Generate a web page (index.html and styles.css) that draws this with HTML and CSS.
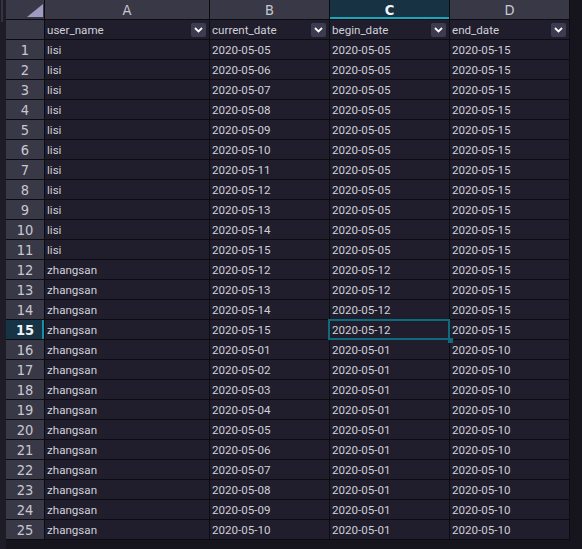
FILE: index.html
```html
<!DOCTYPE html>
<html>
<head>
<meta charset="utf-8">
<link rel="stylesheet" href="styles.css">
</head>
<body>
<div class="app">
  <div class="strip"><div class="thumb"></div></div>
  <div class="sheet">
    <div class="corner"><svg width="16" height="13" viewBox="0 0 16 13"><polygon points="16,0 16,13 0,13" fill="#9e9cc2"/></svg></div>
    <div class="colhead">A</div>
    <div class="colhead">B</div>
    <div class="colhead sel">C</div>
    <div class="colhead">D</div>

    <div class="rownum"></div>
    <div class="cell filt">user_name<span class="dd"><svg width="9" height="6" viewBox="0 0 9 6"><path d="M1 1 L4.5 4.5 L8 1" fill="none" stroke="#fff" stroke-width="1.8"/></svg></span></div>
    <div class="cell filt">current_date<span class="dd"><svg width="9" height="6" viewBox="0 0 9 6"><path d="M1 1 L4.5 4.5 L8 1" fill="none" stroke="#fff" stroke-width="1.8"/></svg></span></div>
    <div class="cell filt">begin_date<span class="dd"><svg width="9" height="6" viewBox="0 0 9 6"><path d="M1 1 L4.5 4.5 L8 1" fill="none" stroke="#fff" stroke-width="1.8"/></svg></span></div>
    <div class="cell filt">end_date<span class="dd"><svg width="9" height="6" viewBox="0 0 9 6"><path d="M1 1 L4.5 4.5 L8 1" fill="none" stroke="#fff" stroke-width="1.8"/></svg></span></div>

    <div class="rownum">1</div><div class="cell">lisi</div><div class="cell">2020-05-05</div><div class="cell">2020-05-05</div><div class="cell">2020-05-15</div>
    <div class="rownum">2</div><div class="cell">lisi</div><div class="cell">2020-05-06</div><div class="cell">2020-05-05</div><div class="cell">2020-05-15</div>
    <div class="rownum">3</div><div class="cell">lisi</div><div class="cell">2020-05-07</div><div class="cell">2020-05-05</div><div class="cell">2020-05-15</div>
    <div class="rownum">4</div><div class="cell">lisi</div><div class="cell">2020-05-08</div><div class="cell">2020-05-05</div><div class="cell">2020-05-15</div>
    <div class="rownum">5</div><div class="cell">lisi</div><div class="cell">2020-05-09</div><div class="cell">2020-05-05</div><div class="cell">2020-05-15</div>
    <div class="rownum">6</div><div class="cell">lisi</div><div class="cell">2020-05-10</div><div class="cell">2020-05-05</div><div class="cell">2020-05-15</div>
    <div class="rownum">7</div><div class="cell">lisi</div><div class="cell">2020-05-11</div><div class="cell">2020-05-05</div><div class="cell">2020-05-15</div>
    <div class="rownum">8</div><div class="cell">lisi</div><div class="cell">2020-05-12</div><div class="cell">2020-05-05</div><div class="cell">2020-05-15</div>
    <div class="rownum">9</div><div class="cell">lisi</div><div class="cell">2020-05-13</div><div class="cell">2020-05-05</div><div class="cell">2020-05-15</div>
    <div class="rownum">10</div><div class="cell">lisi</div><div class="cell">2020-05-14</div><div class="cell">2020-05-05</div><div class="cell">2020-05-15</div>
    <div class="rownum">11</div><div class="cell">lisi</div><div class="cell">2020-05-15</div><div class="cell">2020-05-05</div><div class="cell">2020-05-15</div>
    <div class="rownum">12</div><div class="cell">zhangsan</div><div class="cell">2020-05-12</div><div class="cell">2020-05-12</div><div class="cell">2020-05-15</div>
    <div class="rownum">13</div><div class="cell">zhangsan</div><div class="cell">2020-05-13</div><div class="cell">2020-05-12</div><div class="cell">2020-05-15</div>
    <div class="rownum">14</div><div class="cell">zhangsan</div><div class="cell">2020-05-14</div><div class="cell">2020-05-12</div><div class="cell">2020-05-15</div>
    <div class="rownum sel">15</div><div class="cell">zhangsan</div><div class="cell">2020-05-15</div><div class="cell active">2020-05-12</div><div class="cell">2020-05-15</div>
    <div class="rownum">16</div><div class="cell">zhangsan</div><div class="cell">2020-05-01</div><div class="cell">2020-05-01</div><div class="cell">2020-05-10</div>
    <div class="rownum">17</div><div class="cell">zhangsan</div><div class="cell">2020-05-02</div><div class="cell">2020-05-01</div><div class="cell">2020-05-10</div>
    <div class="rownum">18</div><div class="cell">zhangsan</div><div class="cell">2020-05-03</div><div class="cell">2020-05-01</div><div class="cell">2020-05-10</div>
    <div class="rownum">19</div><div class="cell">zhangsan</div><div class="cell">2020-05-04</div><div class="cell">2020-05-01</div><div class="cell">2020-05-10</div>
    <div class="rownum">20</div><div class="cell">zhangsan</div><div class="cell">2020-05-05</div><div class="cell">2020-05-01</div><div class="cell">2020-05-10</div>
    <div class="rownum">21</div><div class="cell">zhangsan</div><div class="cell">2020-05-06</div><div class="cell">2020-05-01</div><div class="cell">2020-05-10</div>
    <div class="rownum">22</div><div class="cell">zhangsan</div><div class="cell">2020-05-07</div><div class="cell">2020-05-01</div><div class="cell">2020-05-10</div>
    <div class="rownum">23</div><div class="cell">zhangsan</div><div class="cell">2020-05-08</div><div class="cell">2020-05-01</div><div class="cell">2020-05-10</div>
    <div class="rownum">24</div><div class="cell">zhangsan</div><div class="cell">2020-05-09</div><div class="cell">2020-05-01</div><div class="cell">2020-05-10</div>
    <div class="rownum">25</div><div class="cell">zhangsan</div><div class="cell">2020-05-10</div><div class="cell">2020-05-01</div><div class="cell">2020-05-10</div>
  </div>
</div>
</body>
</html>
```

FILE: styles.css
```css
html, body {
  margin: 0;
  padding: 0;
  background: #16151d;
  width: 582px;
  height: 549px;
  overflow: hidden;
}

.app {
  display: flex;
  align-items: flex-start;
  height: 549px;
}

.strip {
  width: 6px;
  height: 549px;
  background: #1d1c27;
  flex: none;
}

.thumb {
  width: 2px;
  height: 22px;
  margin-left: 1px;
  background: #34333f;
}

.sheet {
  display: grid;
  grid-template-columns: 38px 164px 119px 119px 119px;
  grid-auto-rows: 19px;
  gap: 1px;
  padding: 0 1px 1px 0;
  background: #0c0c10;
  flex: none;
}

.corner, .colhead, .rownum {
  background: #393846;
  color: #c8c8d2;
  font-family: "DejaVu Sans Condensed", "DejaVu Sans", sans-serif;
  font-size: 14.5px;
  display: flex;
  align-items: center;
  justify-content: center;
}

.corner {
  justify-content: flex-end;
  align-items: flex-end;
  padding: 0 1px 2px 0;
}

.colhead.sel {
  background: #163243;
  color: #f2f4f6;
  font-weight: bold;
  box-shadow: inset 0 -2px 0 #1aa5bb;
}

.rownum.sel {
  background: #163445;
  color: #f2f4f6;
  font-weight: bold;
  box-shadow: inset -2px 0 0 #1a8fa3;
}

.cell {
  background: #201e2d;
  color: #d0d0d8;
  font-family: Roboto, "Liberation Sans", sans-serif;
  font-size: 11.6px;
  padding: 0 3px 0 2px;
  display: flex;
  align-items: center;
  white-space: nowrap;
  overflow: visible;
}

.cell.filt {
  justify-content: space-between;
}

.dd {
  width: 15px;
  height: 14px;
  background: #3c3b4f;
  border-radius: 2px;
  display: flex;
  align-items: center;
  justify-content: center;
}

.cell.active {
  position: relative;
}

.cell.active::before {
  content: "";
  position: absolute;
  left: -2px;
  top: -1px;
  right: -1px;
  bottom: -1px;
  border: 2px solid #0e6b7d;
  pointer-events: none;
}

.cell.active::after {
  content: "";
  position: absolute;
  right: -4px;
  bottom: -4px;
  width: 5px;
  height: 5px;
  background: #0e6b7d;
}
```
